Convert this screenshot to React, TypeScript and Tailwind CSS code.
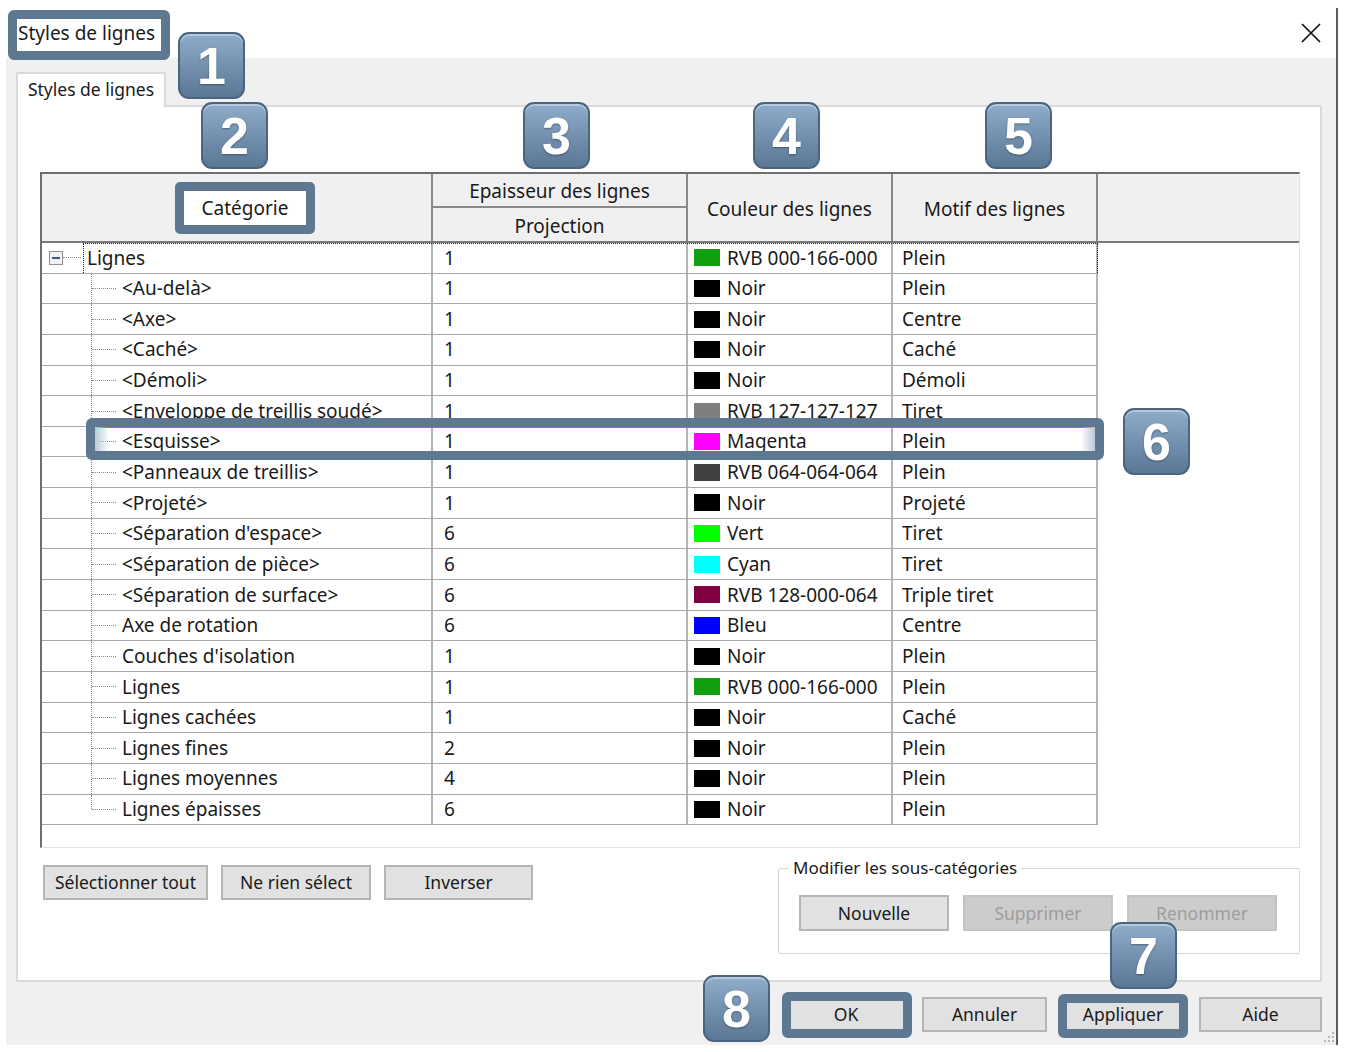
import React from "react";
import clsx from "clsx";

type Row = {
  name: string;
  top?: boolean;
  weight: string;
  swatch: string;
  color: string;
  pattern: string;
};

const rows: Row[] = [
  { name: "Lignes", top: true, weight: "1", swatch: "bg-[#10a010]", color: "RVB 000-166-000", pattern: "Plein" },
  { name: "<Au-delà>", weight: "1", swatch: "bg-black", color: "Noir", pattern: "Plein" },
  { name: "<Axe>", weight: "1", swatch: "bg-black", color: "Noir", pattern: "Centre" },
  { name: "<Caché>", weight: "1", swatch: "bg-black", color: "Noir", pattern: "Caché" },
  { name: "<Démoli>", weight: "1", swatch: "bg-black", color: "Noir", pattern: "Démoli" },
  { name: "<Enveloppe de treillis soudé>", weight: "1", swatch: "bg-[#7f7f7f]", color: "RVB 127-127-127", pattern: "Tiret" },
  { name: "<Esquisse>", weight: "1", swatch: "bg-[#ff00ff]", color: "Magenta", pattern: "Plein" },
  { name: "<Panneaux de treillis>", weight: "1", swatch: "bg-[#404040]", color: "RVB 064-064-064", pattern: "Plein" },
  { name: "<Projeté>", weight: "1", swatch: "bg-black", color: "Noir", pattern: "Projeté" },
  { name: "<Séparation d'espace>", weight: "6", swatch: "bg-[#00ff00]", color: "Vert", pattern: "Tiret" },
  { name: "<Séparation de pièce>", weight: "6", swatch: "bg-[#00ffff]", color: "Cyan", pattern: "Tiret" },
  { name: "<Séparation de surface>", weight: "6", swatch: "bg-[#800040]", color: "RVB 128-000-064", pattern: "Triple tiret" },
  { name: "Axe de rotation", weight: "6", swatch: "bg-[#0000ff]", color: "Bleu", pattern: "Centre" },
  { name: "Couches d'isolation", weight: "1", swatch: "bg-black", color: "Noir", pattern: "Plein" },
  { name: "Lignes", weight: "1", swatch: "bg-[#10a010]", color: "RVB 000-166-000", pattern: "Plein" },
  { name: "Lignes cachées", weight: "1", swatch: "bg-black", color: "Noir", pattern: "Caché" },
  { name: "Lignes fines", weight: "2", swatch: "bg-black", color: "Noir", pattern: "Plein" },
  { name: "Lignes moyennes", weight: "4", swatch: "bg-black", color: "Noir", pattern: "Plein" },
  { name: "Lignes épaisses", weight: "6", swatch: "bg-black", color: "Noir", pattern: "Plein" },
];

// numbered callout, drawn over the dialog
const Badge = ({ n, pos }: { n: string; pos: string }) => (
  <div
    className={clsx(
      "absolute w-[67px] h-[67px] rounded-[11px] border-2 border-[#4b6580] bg-linear-to-b from-[#8fadca] to-[#5a7795] shadow-[inset_0_2px_0_rgba(255,255,255,0.35)] flex items-center justify-center text-white font-bold text-[52px] leading-none font-['Liberation_Sans',Arial,sans-serif] [text-shadow:0_1px_2px_rgba(0,0,0,0.35)]",
      pos
    )}
  >
    {n}
  </div>
);

const Frame = ({ pos }: { pos: string }) => (
  <div className={clsx("absolute border-[9px] border-[#5f7892] rounded-[6px] pointer-events-none", pos)} />
);

const Btn = ({ label, w, disabled }: { label: string; w: string; disabled?: boolean }) => (
  <div
    className={clsx(
      "h-[35px] flex items-center justify-center border-2 text-[17.5px]",
      w,
      disabled ? "bg-[#cccccc] border-[#c4c4c4] text-[#9d9d9d]" : "bg-[#e1e1e1] border-[#b5b5b5] text-[#1a1a1a]"
    )}
  >
    {label}
  </div>
);

const cell = "h-full flex items-center border-r-2 border-[#b4b4b4]";
const head = "flex items-center justify-center pt-[3px] border-r-2 border-[#8a8a8a]";

export default function App() {
  return (
    <div className="relative w-[1352px] h-[1052px] bg-white overflow-hidden text-[#1a1a1a] font-['Noto_Sans',sans-serif]">
      <div className="ml-[6px] mt-[8px] w-[1332px] h-[1037px] flex flex-col border-r-2 border-[#5c5c5c]">
        {/* title bar */}
        <div className="h-[50px] flex items-center justify-between pl-[12px] pr-[14px] bg-white">
          <span className="text-[19px]">Styles de lignes</span>
          <svg width="22" height="22" viewBox="0 0 22 22">
            <path d="M2 2 L20 20 M20 2 L2 20" stroke="#111" strokeWidth="1.7" />
          </svg>
        </div>

        <div className="flex-1 bg-[#f0f0f0] flex flex-col pl-[10px] pr-[14px] pt-[14px]">
          <div className="relative z-10 -mb-[2px] w-[150px] h-[35px] pb-[3px] bg-white border-2 border-b-0 border-[#dadada] flex items-center justify-center text-[17.5px]">
            Styles de lignes
          </div>

          <div className="h-[877px] bg-white border-2 border-[#dadada] flex flex-col pl-[22px] pr-[20px] pt-[65px]">
            {/* table */}
            <div className="h-[676px] border-t-2 border-l-2 border-[#6e6e6e] border-r border-b border-r-[#e4e4e4] border-b-[#e4e4e4] flex flex-col text-[19px]">
              <div className="h-[69px] grid grid-cols-[391px_255px_205px_205px_1fr] bg-[#f0f0f0] border-b-2 border-[#7a7a7a]">
                <div className="flex items-center justify-center border-r-2 border-[#8a8a8a]">
                  <div className="ml-[17px] w-[140px] h-[52px] pt-[2px] border-[9px] border-[#5f7892] rounded-[5px] bg-white flex items-center justify-center">
                    Catégorie
                  </div>
                </div>
                <div className="flex flex-col border-r-2 border-[#8a8a8a]">
                  <div className="h-[34px] pt-[3px] flex items-center justify-center border-b-2 border-[#8a8a8a]">Epaisseur des lignes</div>
                  <div className="flex-1 pt-[3px] flex items-center justify-center">Projection</div>
                </div>
                <div className={head}>Couleur des lignes</div>
                <div className={head}>Motif des lignes</div>
                <div />
              </div>

              {rows.map((r, i) => (
                <div
                  key={i}
                  className="relative h-[30.65px] w-[1056px] grid grid-cols-[391px_255px_205px_205px] border-b border-[#a8a8a8]"
                >
                  <div className={cell}>
                    {r.top ? (
                      <div className="flex items-center pl-[7px]">
                        <span className="w-[14px] h-[14px] border border-[#8f8f8f] bg-[#f2f2f2] flex items-center justify-center">
                          <span className="w-[8px] h-[2px] bg-[#3c5a8c]" />
                        </span>
                        <span className="w-[18px] border-t border-dotted border-[#8a8a8a]" />
                        <span className="ml-[6px]">{r.name}</span>
                      </div>
                    ) : (
                      <div className="h-full flex items-center pl-[49px]">
                        <span
                          className={clsx(
                            "border-l border-dotted border-[#8a8a8a]",
                            i === rows.length - 1 ? "self-start h-1/2" : "self-stretch"
                          )}
                        />
                        <span className="w-[24px] border-t border-dotted border-[#8a8a8a]" />
                        <span className="ml-[6px] whitespace-nowrap">{r.name}</span>
                      </div>
                    )}
                  </div>
                  <div className={clsx(cell, "pl-[11px]")}>{r.weight}</div>
                  <div className={clsx(cell, "pl-[6px] gap-[7px]")}>
                    <span className={clsx("w-[26px] h-[17px]", r.swatch)} />
                    <span>{r.color}</span>
                  </div>
                  <div className={clsx(cell, "pl-[9px]")}>{r.pattern}</div>
                  {r.top && (
                    <div className="absolute left-[41px] top-0 w-[1015px] h-full border border-b-0 border-dotted border-[#222] pointer-events-none" />
                  )}
                </div>
              ))}
            </div>

            <div className="mt-[8px] flex justify-between items-start">
              <div className="mt-[9px] flex gap-[13px] ml-[3px]">
                <Btn label="Sélectionner tout" w="w-[165px]" />
                <Btn label="Ne rien sélect" w="w-[150px]" />
                <Btn label="Inverser" w="w-[149px]" />
              </div>
              <fieldset className="w-[522px] border border-[#d6d6d6] rounded-[2px] pl-[20px] pt-[15px] pb-[22px]">
                <legend className="-ml-[10px] px-[4px] text-[17px] leading-[24px]">Modifier les sous-catégories</legend>
                <div className="flex gap-[14px]">
                  <div className="h-[36px] w-[150px] flex items-center justify-center border-2 bg-[#e1e1e1] border-[#b5b5b5] text-[17.5px]">
                    Nouvelle
                  </div>
                  <div className="h-[36px] w-[150px] flex items-center justify-center border-2 bg-[#cccccc] border-[#c4c4c4] text-[#9d9d9d] text-[17.5px]">
                    Supprimer
                  </div>
                  <div className="h-[36px] w-[150px] flex items-center justify-center border-2 bg-[#cccccc] border-[#c4c4c4] text-[#9d9d9d] text-[17.5px]">
                    Renommer
                  </div>
                </div>
              </fieldset>
            </div>
          </div>

          <div className="mt-[15px] flex justify-end gap-[13px]">
            <Btn label="OK" w="w-[126px]" />
            <Btn label="Annuler" w="w-[125px]" />
            <Btn label="Appliquer" w="w-[126px]" />
            <Btn label="Aide" w="w-[123px]" />
          </div>
        </div>
      </div>

      {/* resize grip */}
      <svg className="absolute left-[1323px] top-[1030px]" width="12" height="14" viewBox="0 0 12 14">
        {[
          [9, 2],
          [9, 6],
          [5, 6],
          [9, 10],
          [5, 10],
          [1, 10],
        ].map(([x, y], k) => (
          <rect key={k} x={x} y={y} width="2" height="2" fill="#b8b8b8" />
        ))}
      </svg>

      {/* annotations */}
      <Frame pos="left-[8px] top-[10px] w-[162px] h-[50px]" />
      <div className="absolute left-[86px] top-[418px] w-[1018px] h-[42px] border-[9px] border-[#5f7892] rounded-[6px] pointer-events-none overflow-hidden">
        <div className="h-[1px] bg-[#ff4b3a]" />
        <div className="absolute left-0 top-0 w-[14px] h-full bg-linear-to-r from-[#b9cad8] to-transparent" />
        <div className="absolute right-0 top-0 w-[14px] h-full bg-linear-to-l from-[#b9cad8] to-transparent" />
      </div>
      <Frame pos="left-[782px] top-[992px] w-[130px] h-[46px]" />
      <Frame pos="left-[1058px] top-[994px] w-[130px] h-[44px]" />

      <Badge n="1" pos="left-[178px] top-[32px]" />
      <Badge n="2" pos="left-[201px] top-[102px]" />
      <Badge n="3" pos="left-[523px] top-[102px]" />
      <Badge n="4" pos="left-[753px] top-[102px]" />
      <Badge n="5" pos="left-[985px] top-[102px]" />
      <Badge n="6" pos="left-[1123px] top-[408px]" />
      <Badge n="7" pos="left-[1110px] top-[922px]" />
      <Badge n="8" pos="left-[703px] top-[975px]" />
    </div>
  );
}
